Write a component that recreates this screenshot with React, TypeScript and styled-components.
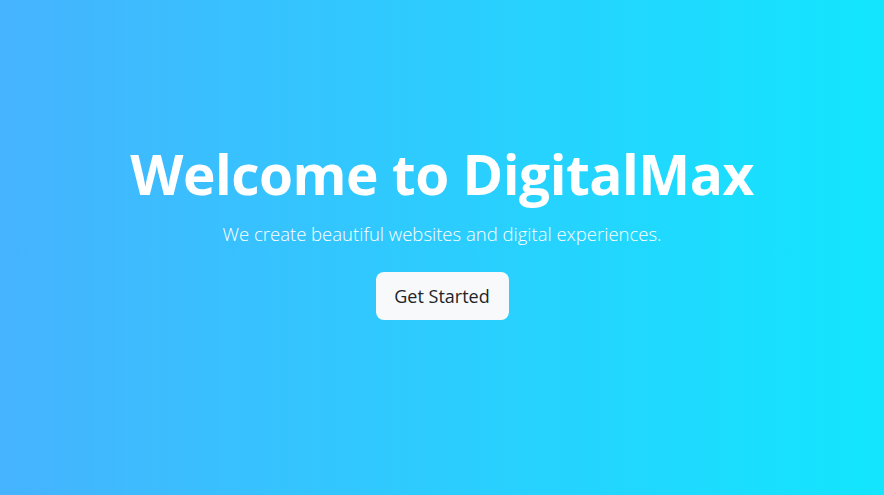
import React from "react";
import styled, { createGlobalStyle } from "styled-components";

const GlobalStyle = createGlobalStyle`
  html, body { margin: 0; padding: 0; }
  body { font-family: "Open Sans", "Noto Sans", sans-serif; }
  * { box-sizing: border-box; }
`;

const Hero = styled.section`
  min-height: 495px;
  height: 100vh;
  background: linear-gradient(to right, #46b3fe 0%, #12e6fe 100%);
  display: flex;
  flex-direction: column;
  align-items: center;
  justify-content: center;
  padding-bottom: 34px;
  color: #ffffff;
  text-align: center;
`;

const Title = styled.h1`
  margin: 0 0 15px;
  font-size: 55px;
  font-weight: 700;
  line-height: 1.15;
  letter-spacing: -0.5px;
`;

const Subtitle = styled.p`
  margin: 0 0 24px;
  font-size: 18.5px;
  font-weight: 300;
  line-height: 1.5;
`;

const CtaButton = styled.button`
  width: 133px;
  height: 48px;
  border: none;
  border-radius: 8px;
  background: #f8f9fa;
  color: #212529;
  font-family: inherit;
  font-size: 18px;
  font-weight: 400;
  cursor: pointer;
`;

export default function App() {
  return (
    <>
      <GlobalStyle />
      <Hero>
        <Title>Welcome to DigitalMax</Title>
        <Subtitle>We create beautiful websites and digital experiences.</Subtitle>
        <CtaButton>Get Started</CtaButton>
      </Hero>
    </>
  );
}
